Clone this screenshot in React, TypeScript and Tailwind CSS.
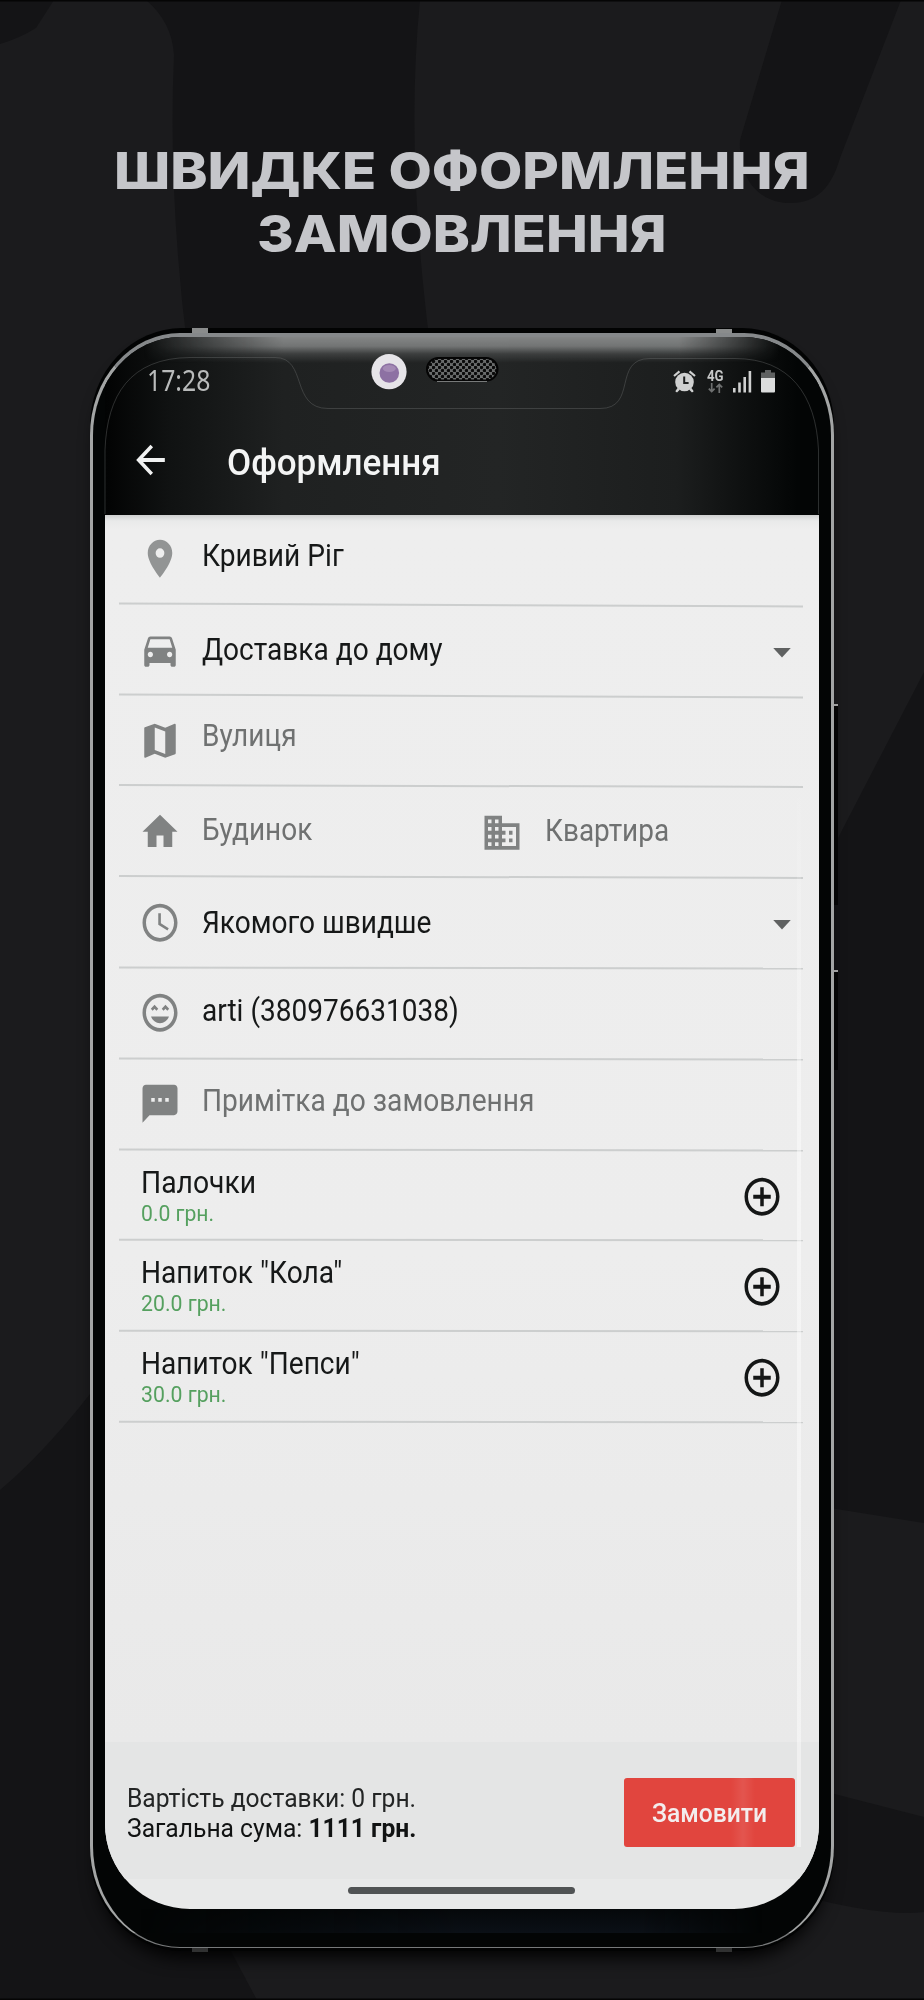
import React, { useLayoutEffect, useRef, useState } from 'react';
import {
  MdAddCircleOutline,
  MdArrowBack,
  MdArrowDropDown,
  MdDirectionsCar,
  MdDomain,
  MdHome,
  MdMap,
  MdPlace,
  MdSchedule,
  MdTextsms,
} from 'react-icons/md';
import type { IconType } from 'react-icons';

interface FitTextProps {
  width: number;
  className?: string;
  children: React.ReactNode;
}

// Condenses or stretches a single line so that it takes exactly `width` pixels
const FitText: React.FC<FitTextProps> = ({ width, className = '', children }) => {
  const ref = useRef<HTMLSpanElement>(null);
  const [scale, setScale] = useState(1);

  useLayoutEffect(() => {
    if (ref.current) setScale(width / ref.current.offsetWidth);
  }, [width]);

  return (
    <span className={`block whitespace-nowrap ${className}`} style={{ width }}>
      <span ref={ref} className="inline-block origin-left" style={{ transform: `scaleX(${scale})` }}>
        {children}
      </span>
    </span>
  );
};

const RowIcon: React.FC<{ icon: IconType; className?: string }> = ({ icon: Icon, className = '' }) => (
  <Icon preserveAspectRatio="none" className={`h-[45.5px] w-[42px] shrink-0 ${className}`} />
);

const FaceIcon: React.FC<{ className?: string }> = ({ className = '' }) => (
  <svg viewBox="0 0 24 24" preserveAspectRatio="none" fill="currentColor" className={`h-[45.5px] w-[42px] shrink-0 ${className}`}>
    <path d="M11.99 2C6.47 2 2 6.47 2 12s4.47 10 9.99 10S22 17.53 22 12 17.52 2 11.99 2zM12 20c-4.42 0-8-3.58-8-8s3.58-8 8-8 8 3.58 8 8-3.58 8-8 8z" />
    <path d="M13 9.94L14.06 11l1.06-1.06L16.18 11l1.06-1.06-2.12-2.12zM8.88 9.94L9.94 11 11 9.94 8.88 7.82 6.76 9.94 7.82 11zM12 17.5c2.33 0 4.31-1.46 5.11-3.5H6.89c.8 2.04 2.78 3.5 5.11 3.5z" />
  </svg>
);

interface RowProps {
  divider: string;
  children: React.ReactNode;
}

const Row: React.FC<RowProps> = ({ divider, children }) => (
  <div className="flex h-[90.8px] flex-col">
    <div className="flex min-h-0 flex-1 items-start pl-[20px]">{children}</div>
    <div className={`h-[2px] shrink-0 bg-[#cccece] ${divider}`} />
  </div>
);

const Extra: React.FC<{ name: string; nameWidth: number; price: string; priceWidth: number; divider: string }> = ({
  name,
  nameWidth,
  price,
  priceWidth,
  divider,
}) => (
  <Row divider={divider}>
    <div className="flex-1 pl-[2px] pt-[14px]">
      <FitText width={nameWidth} className="text-[30.5px] leading-[36px] text-[#161818]">{name}</FitText>
      <FitText width={priceWidth} className="text-[22px] leading-[25px] text-[#55a05f]">{price}</FitText>
    </div>
    <RowIcon icon={MdAddCircleOutline} className="mr-[20px] mt-[23px] text-[#141616]" />
  </Row>
);

const Backdrop = () => (
  <svg className="absolute inset-0 h-full w-full" viewBox="0 0 924 2000" fill="#141416">
    <path d="M0 0H54L36 28Q20 38 0 44Z" />
    <path d="M146 0Q172 22 174 55Q168 190 187 345H430Q405 150 420 0Z" />
    <path d="M782 0L740 140C738 180 760 203 790 203C818 203 832 186 840 158L901 0Z" />
    <path d="M924 672L780 950V1500L924 1523Z" />
    <path d="M0 1490Q60 1440 130 1340V1940H225L257 2000H0Z" />
    <path d="M780 1780L924 1817V1912Q880 1918 780 1890Z" />
    <path d="M0 0H924V1.5H0ZM0 1998.5H924V2000H0Z" fill="#050505" />
  </svg>
);

const AlarmIcon = () => (
  <svg className="h-[23px] w-[23px]" viewBox="0 0 23 23" fill="#cfd0d0">
    <path d="M0.3 5.2L5.8 0.6L7.2 2.2L1.7 6.8ZM22.7 5.2L17.2 0.6L15.8 2.2L21.3 6.8Z" />
    <circle cx="11.5" cy="12" r="9.3" />
    <path d="M4.5 18L2.3 21.2L4 22.4L7 19.5ZM18.5 18L20.7 21.2L19 22.4L16 19.5Z" />
    <path d="M11.2 6.5V13H15.6" fill="none" stroke="#1d1f1f" strokeWidth="2" />
  </svg>
);

const StatusIcons = () => (
  <div className="flex items-start">
    <AlarmIcon />
    <div className="ml-[11px] flex flex-col items-center">
      <span className="text-[14px] font-bold leading-[12px] text-[#c6c7c7]">
        <FitText width={17}>4G</FitText>
      </span>
      <svg className="mt-px h-[10px] w-[15px]" viewBox="0 0 15 10" fill="none" stroke="#6f7171" strokeWidth="1.7">
        <path d="M3.7 0V8.5M0.8 5.6L3.7 8.6L6.6 5.6M11.3 10V1.5M8.4 4.4L11.3 1.4L14.2 4.4" />
      </svg>
    </div>
    <svg className="ml-[9px] h-[23px] w-[19px]" viewBox="0 0 19 23" fill="#cfd0d0">
      <path d="M0 18H2.6V22.5H0ZM5.2 12.5H7.8V22.5H5.2ZM10.4 7H13V22.5H10.4ZM15.6 1H18.2V22.5H15.6Z" />
    </svg>
    <svg className="ml-[8px] h-[23px] w-[16px]" viewBox="0 0 16 23">
      <path d="M5 0H11V2.5H15V8H1V2.5H5Z" fill="#5f6161" />
      <path d="M1 8H15V21.5Q15 22.5 14 22.5H2Q1 22.5 1 21.5Z" fill="#dcdddd" />
    </svg>
  </div>
);

// Notch outline, front camera and speaker grille, drawn over the top of the display
const Notch = () => (
  <svg className="h-[178px] w-[744px]" viewBox="90 336 744 178">
    <defs>
      <pattern id="grille" width="6" height="6" patternUnits="userSpaceOnUse">
        <rect width="6" height="6" fill="#6a6c6c" />
        <circle cx="1.5" cy="1.5" r="1.7" fill="#0a0a0a" />
        <circle cx="4.5" cy="4.5" r="1.7" fill="#0a0a0a" />
      </pattern>
    </defs>
    <path
      d="M105 514V450C107 395 130 358 190 357.5H275C308 357.5 290 408.5 328 408.5H600C638 408.5 612 358.5 650 358.5H735C790 358.5 816 395 818.5 450V514"
      fill="none"
      stroke="#6b6e6d"
      strokeOpacity="0.4"
    />
    <circle cx="389" cy="371.7" r="17.6" fill="#e6e4e8" />
    <circle cx="389.3" cy="373" r="9.8" fill="#8d71a3" />
    <ellipse cx="389.3" cy="368.5" rx="6.5" ry="3.5" fill="#a48ab5" />
    <rect x="427" y="358" width="70.5" height="22.5" rx="11.2" fill="url(#grille)" stroke="#050505" strokeWidth="2" />
    <path d="M437 381.5H487" stroke="#777979" />
  </svg>
);

const AppBar = () => (
  <div className="flex h-[178px] flex-col bg-[linear-gradient(90deg,#020303_0%,#101212_9%,#1f2121_25%,#232525_55%,#1c1e1e_80%,#030505_97%)]">
    <div className="flex h-[61px] items-start justify-between pl-[42px] pr-[43px] pt-[29px]">
      <FitText width={63.5} className="font-['Noto_Sans',sans-serif] text-[28.5px] font-normal leading-[28px] text-[#b9bbbb]">
        17:28
      </FitText>
      <div className="pt-[4px]">
        <StatusIcons />
      </div>
    </div>
    <div className="flex items-start pl-[24px] pt-[39px]">
      <MdArrowBack preserveAspectRatio="none" className="h-[46px] w-[43px] text-[#f0f1f1]" />
      <FitText width={214} className="ml-[55px] mt-[1px] text-[37px] font-medium leading-[50px] text-[#f3f4f4]">
        Оформлення
      </FitText>
    </div>
  </div>
);

const Form = () => (
  <div className="flex flex-1 flex-col bg-[linear-gradient(180deg,#cfd0d0_0,#e9eaea_6px,#eeeeee_14px,#ededed_60%,#e9e9e9_100%)] pl-[14px] pr-[16px] text-[30.5px] leading-[36px] text-[#161818]">
    <Row divider="skew-y-[0.25deg]">
      <RowIcon icon={MdPlace} className="mt-[21px] text-[#929494]" />
      <FitText width={142} className="ml-[21px] mt-[23px]">Кривий Ріг</FitText>
    </Row>
    <Row divider="skew-y-[0.25deg]">
      <RowIcon icon={MdDirectionsCar} className="mt-[21px] text-[#808282]" />
      <FitText width={241} className="ml-[21px] mt-[26px]">Доставка до дому</FitText>
      <RowIcon icon={MdArrowDropDown} className="ml-auto mt-[23px] text-[#5f6161]" />
    </Row>
    <Row divider="skew-y-[0.15deg]">
      <RowIcon icon={MdMap} className="mt-[21px] text-[#808282]" />
      <FitText width={94.5} className="ml-[21px] mt-[21.5px] text-[#6f7171]">Вулиця</FitText>
    </Row>
    <Row divider="skew-y-[0.15deg]">
      <RowIcon icon={MdHome} className="mt-[22px] text-[#808282]" />
      <FitText width={110} className="ml-[21px] mt-[25px] text-[#6f7171]">Будинок</FitText>
      <RowIcon icon={MdDomain} className="ml-[169px] mt-[23px] text-[#808282]" />
      <FitText width={124.5} className="ml-[21.5px] mt-[25.5px] text-[#6f7171]">Квартира</FitText>
    </Row>
    <Row divider="skew-y-[0.1deg]">
      <RowIcon icon={MdSchedule} className="mt-[22px] text-[#808282]" />
      <FitText width={229} className="ml-[21px] mt-[27px]">Якомого швидше</FitText>
      <RowIcon icon={MdArrowDropDown} className="ml-auto mt-[23px] text-[#5f6161]" />
    </Row>
    <Row divider="skew-y-[0.1deg]">
      <FaceIcon className="mt-[21.5px] text-[#808282]" />
      <FitText width={256.5} className="ml-[21px] mt-[24px]">arti (380976631038)</FitText>
    </Row>
    <Row divider="skew-y-[0.08deg]">
      <RowIcon icon={MdTextsms} className="mt-[21.5px] text-[#808282]" />
      <FitText width={332} className="ml-[21px] mt-[23px] text-[#6f7171]">Примітка до замовлення</FitText>
    </Row>
    <Extra name="Палочки" nameWidth={115} price="0.0 грн." priceWidth={73} divider="skew-y-[0.06deg]" />
    <Extra name={'Напиток "Кола"'} nameWidth={201} price="20.0 грн." priceWidth={85} divider="skew-y-[0.04deg]" />
    <Extra name={'Напиток "Пепси"'} nameWidth={219} price="30.0 грн." priceWidth={85} divider="skew-y-[0.04deg]" />
  </div>
);

const Checkout = () => (
  <div className="flex h-[137px] items-start justify-between bg-[#e4e5e5] pl-[22px] pr-[24.5px]">
    <div className="pt-[41px] text-[26px] leading-[30px] text-[#232525]">
      <FitText width={289}>Вартість доставки: 0 грн.</FitText>
      <FitText width={289} className="text-[#111313]">
        Загальна сума: <b>1111 грн.</b>
      </FitText>
    </div>
    <button className="mt-[36px] flex h-[69px] w-[171px] items-center justify-center rounded-[3px] bg-[#e1453e] pt-[2px]">
      <FitText width={115} className="text-[25.5px] font-medium text-[#f3eded]">Замовити</FitText>
    </button>
  </div>
);

const Screen = () => (
  <div className="flex h-full flex-col overflow-hidden rounded-b-[85px] bg-[#e8e9e9]">
    <Form />
    <Checkout />
    <div className="flex h-[30px] shrink-0 justify-center pr-[2px] pt-[8px]">
      <div className="h-[7px] w-[227px] rounded-full bg-[#505354]" />
    </div>
  </div>
);

const Phone = () => (
  <div className="relative mx-auto h-[1623px] w-[744px] rounded-[92px/98px] bg-[#020303] pt-[5px] shadow-[0_14px_18px_-8px_#000]">
    {/* antenna bands and side buttons */}
    <div className="absolute left-[102px] top-0 h-[8px] w-[16px] bg-[#8a8c8c]" />
    <div className="absolute right-[102px] top-[1px] h-[8px] w-[16px] bg-[#8a8c8c]" />
    <div className="absolute -bottom-[1px] left-[102px] h-[5px] w-[16px] bg-[#303131]" />
    <div className="absolute -bottom-[1px] right-[102px] h-[5px] w-[16px] bg-[#303131]" />
    <div className="absolute -right-[4px] top-[376px] h-[201px] w-[4px] bg-[linear-gradient(180deg,#a0a0a0_2px,#050505_2px)]" />
    <div className="absolute -right-[4px] top-[642px] h-[100px] w-[4px] bg-[linear-gradient(180deg,#a0a0a0_2px,#050505_2px)]" />

    <div className="relative h-[1615px] overflow-hidden rounded-[90px/102px] border-x-[3px] border-b-[1.5px] border-t-[4px] border-b-[#77797a] border-t-[#85888a] border-x-[#a3a5a5] bg-[#030505] px-[12px] font-['Roboto',sans-serif]">
      <AppBar />
      <div className="h-[1394px]">
        <Screen />
      </div>
      <div className="h-[24px] bg-[linear-gradient(180deg,#05080a,#0b1016)] [mask-image:linear-gradient(90deg,transparent_5%,#000_50%,#000_75%,transparent_92%)]" />
      {/* light falling on the glass */}
      <div className="absolute inset-x-[50px] top-0 h-[26px] bg-[linear-gradient(180deg,#8e9090,#7c7e7e_35%,#404242_65%,transparent)] opacity-90 [mask-image:linear-gradient(90deg,transparent,#000_22%,#000_84%,transparent)]" />
      <div className="absolute right-[30px] top-[440px] h-[1070px] w-[4px] bg-[linear-gradient(180deg,transparent,#ffffff70_30%,#ffffff70)]" />
      <div className="absolute right-[76px] top-[1440px] h-[70px] w-[24px] bg-[linear-gradient(90deg,transparent,#ffffff16,transparent)]" />
    </div>
    <div className="absolute left-0 top-[8px]">
      <Notch />
    </div>
  </div>
);

export default function App() {
  return (
    <div className="relative h-[2000px] w-[924px] overflow-hidden bg-[#1b1b1d]">
      <Backdrop />
      <div className="relative flex flex-col">
        <h1 className="flex h-[328px] flex-col items-center pr-[1px] pt-[140px] font-['Inter',sans-serif] text-[51px] font-extrabold leading-[62.5px] text-[#c5c6ca]">
          <FitText width={696}>ШВИДКЕ ОФОРМЛЕННЯ</FitText>
          <FitText width={410}>ЗАМОВЛЕННЯ</FitText>
        </h1>
        <Phone />
      </div>
    </div>
  );
}
